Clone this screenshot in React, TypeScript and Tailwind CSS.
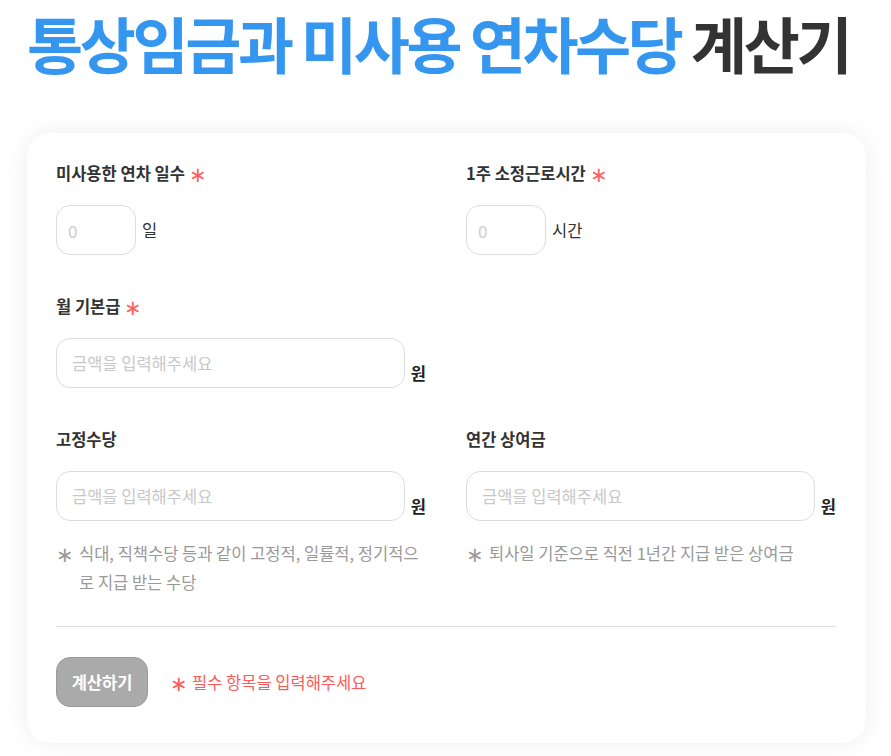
import React from 'react';

const font = { fontFamily: '"Noto Sans CJK KR", "Noto Sans", sans-serif' };

function Label({ text, required }: { text: string; required?: boolean }) {
    return (
        <div className="flex items-center h-[22px] text-[16.5px] font-bold text-[#333] -mt-[1px]">
            <span>{text}</span>
            {required && <span className="ml-[4px] text-[#ff5f5f] font-normal text-[21px] leading-none">∗</span>}
        </div>
    );
}

function SmallInput({ unit }: { unit: string }) {
    return (
        <div className="flex items-center mt-[21px]">
            <input
                placeholder="0"
                className="w-20 h-[50px] rounded-[14px] border border-[#ddd] px-[11px] text-[17px] text-[#333] placeholder:text-[#ccc] outline-none"
            />
            <span className="ml-[6px] text-[16.5px] text-[#333]">{unit}</span>
        </div>
    );
}

function MoneyInput() {
    return (
        <div className="flex items-end mt-[21px]">
            <input
                placeholder="금액을 입력해주세요"
                className="w-[350px] h-[50px] rounded-[14px] border border-[#ddd] px-[15px] text-[16.5px] text-[#333] placeholder:text-[#c8c8c8] outline-none"
            />
            <span className="ml-[6px] mb-[2px] text-[16.5px] font-bold text-[#222]">원</span>
        </div>
    );
}

function Note({ children }: { children: React.ReactNode }) {
    return (
        <div className="flex mt-[18px] text-[16.5px] leading-[29px] text-[#999]">
            <span className="w-[23px] shrink-0 text-[21px] leading-[29px]">∗</span>
            <span>{children}</span>
        </div>
    );
}

export default function App() {
    return (
        <div className="min-h-screen bg-white" style={font}>
            <div className="w-[839px] ml-[27px] pt-[1px]">
                <h1 className="text-[61px] font-bold leading-[82px] tracking-[-3.4px] mt-[1px] whitespace-nowrap">
                    <span className="text-[#3596f0]">통상임금과 미사용 연차수당</span>{' '}
                    <span className="text-[#333]">계산기</span>
                </h1>

                <div className="mt-[49px] bg-white rounded-[24px] shadow-[0_0_24px_rgba(0,0,0,0.07)] pl-[29px] pr-[30px] pt-[30px] pb-[36px]">
                    <div className="grid grid-cols-2 gap-x-10">
                        <div>
                            <Label text="미사용한 연차 일수" required />
                            <SmallInput unit="일" />
                        </div>
                        <div>
                            <Label text="1주 소정근로시간" required />
                            <SmallInput unit="시간" />
                        </div>

                        <div className="mt-[41px]">
                            <Label text="월 기본급" required />
                            <MoneyInput />
                        </div>
                        <div />

                        <div className="mt-[41px]">
                            <Label text="고정수당" />
                            <MoneyInput />
                            <Note>식대, 직책수당 등과 같이 고정적, 일률적, 정기적으로 지급 받는 수당</Note>
                        </div>
                        <div className="mt-[41px]">
                            <Label text="연간 상여금" />
                            <MoneyInput />
                            <Note>퇴사일 기준으로 직전 1년간 지급 받은 상여금</Note>
                        </div>
                    </div>

                    <div className="mt-[29px] border-t border-[#ddd]" />

                    <div className="flex items-center mt-[30px]">
                        <button className="w-[92px] h-[50px] rounded-[14px] bg-[#aaa] border border-[#999] text-white text-[16.5px] font-bold">
                            계산하기
                        </button>
                        <span className="ml-[22px] flex items-center text-[16.5px] text-[#ff5a5a]">
                            <span className="text-[21px] leading-none mr-[4px]">∗</span>
                            필수 항목을 입력해주세요
                        </span>
                    </div>
                </div>
            </div>
        </div>
    );
}
